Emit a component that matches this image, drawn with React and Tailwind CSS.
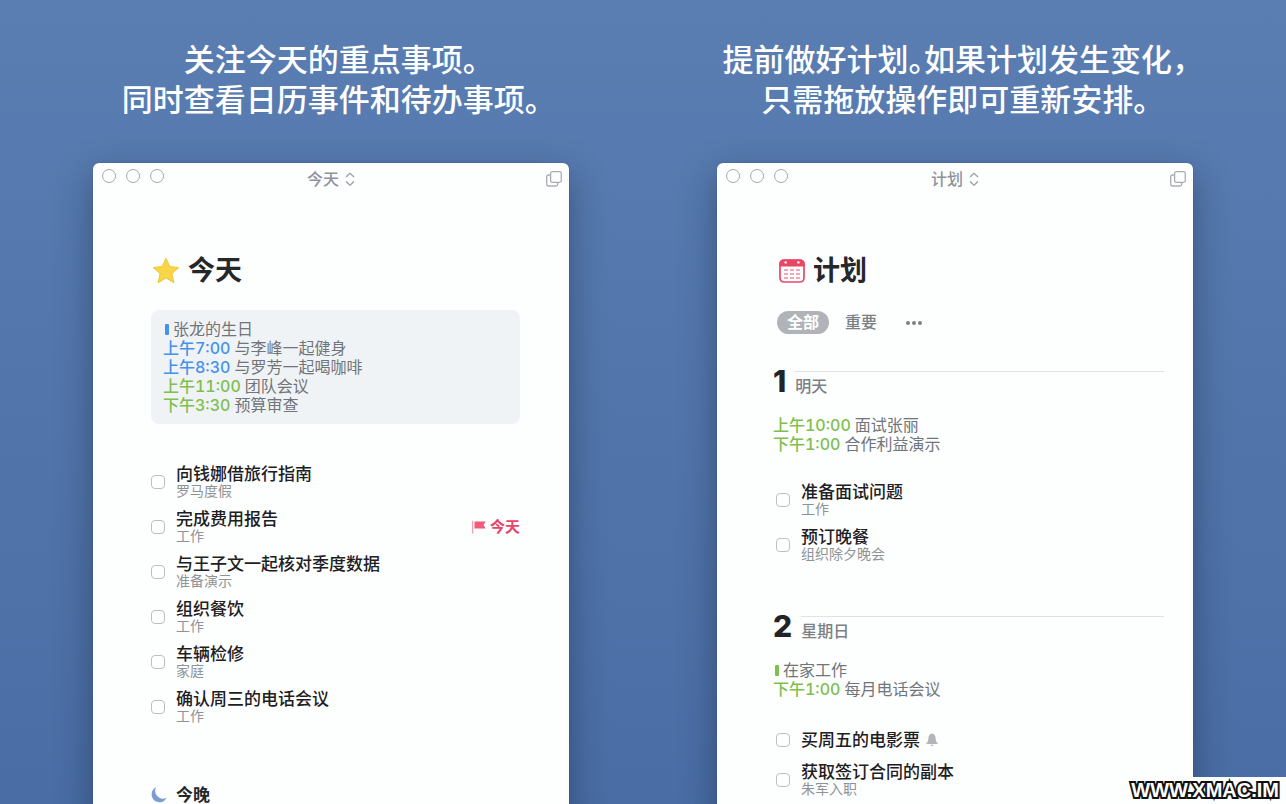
import React from "react";

function StarIcon() {
  return (
    <svg className="size-7 shrink-0" viewBox="0 0 28 28" aria-hidden="true">
      <path
        d="M15 1.6 L18.6 9.600 L27.400 10.500 L20.800 16.400 L22.700 25.400 L15 20.800 L7.300 25.400 L9.200 16.400 L2.600 10.500 L11.400 9.600 Z"
        fill="#f9d648"
        stroke="#f0c93a"
        strokeWidth="1.2"
        strokeLinejoin="round"
      />
    </svg>
  );
}

function CalendarIcon() {
  return (
    <svg className="ml-1.5 mr-0.5 h-[26px] w-[26px] shrink-0" viewBox="0 0 26 26" aria-hidden="true">
      <rect x="1" y="2" width="24" height="22" rx="4" fill="#fff" stroke="#ea4767" strokeWidth="1.7" />
      <path d="M.4 8.4V6A4.4 4.4 0 0 1 4.8 1.4h16.4A4.4 4.4 0 0 1 25.600 6v2.400Z" fill="#ea4767" />
      <circle cx="6.600" cy="4.400" r="1.200" fill="#fff" />
      <circle cx="19.400" cy="4.400" r="1.200" fill="#fff" />
      <g stroke="#f28ba0" strokeWidth="1.400">
        <path d="M5 12h4M11 12h4M17 12h4M5 16h4M11 16h4M17 16h4M5 20h4M11 20h4M17 20h4" />
      </g>
    </svg>
  );
}

function MoonIcon() {
  return (
    <svg className="size-4 shrink-0" viewBox="0 0 17 17" aria-hidden="true">
      <path d="M5.500 .2A8.400 8.400 0 1 0 16.600 11.500 8.300 8.300 0 0 1 5.500 .2Z" fill="#7d9cd3" />
    </svg>
  );
}

function FlagIcon() {
  return (
    <svg className="h-3.5 w-3.5" viewBox="0 0 14 14" aria-hidden="true">
      <path d="M.7 .8v12.700" stroke="#f08aa0" strokeWidth="1" />
      <path d="M2.500 1.500H13.600L11.600 5l2 3.500H2.500Z" fill="#ee5d7b" />
    </svg>
  );
}

function BellIcon() {
  return (
    <svg className="h-3.5 w-3" viewBox="0 0 12 14" aria-label="提醒">
      <path
        d="M6 .6C3.700 .8 2.600 2.600 2.400 5 2.200 7.800 1.800 9 .5 10v1h11v-1C10.200 9 9.800 7.800 9.600 5 9.400 2.600 8.300 .8 6 .6Z"
        fill="#b3b6b9"
      />
      <path d="M4.600 11.800h2.800A1.400 1.400 0 0 1 4.600 11.800Z" fill="#b3b6b9" />
    </svg>
  );
}

function TitleBar({ title }) {
  return (
    <header className="grid h-8 grid-cols-3 items-start">
      <div className="flex gap-2.5 pl-[9px] pt-[6px]">
        {["关闭", "最小化", "缩放"].map((name) => (
          <button
            key={name}
            type="button"
            aria-label={name}
            className="size-3.5 rounded-full border border-[#a6a8b3] bg-transparent"
          />
        ))}
      </div>
      <button
        type="button"
        className="flex items-center justify-center gap-1.5 pt-1 text-base leading-6 font-medium text-[#8e939b]"
      >
        {title}
        <svg className="h-3.5 w-2.5" viewBox="0 0 10 14" fill="none" stroke="#9a9ea5" strokeWidth="1.300" aria-hidden="true">
          <path d="M1 5l4-3.700L9 5M1 9.500l4 3.700 4-3.700" />
        </svg>
      </button>
      <button type="button" aria-label="新窗口" className="justify-self-end pr-[7px] pt-2">
        <svg className="size-4" viewBox="0 0 16 16" fill="none" stroke="#a9adb2" strokeWidth="1.300" aria-hidden="true">
          <rect x="4.600" y=".7" width="10.700" height="10.700" rx="1.800" />
          <path d="M4.600 4H2.500A1.800 1.800 0 0 0 .7 5.800v7.400A1.800 1.800 0 0 0 2.500 15h7.400a1.800 1.800 0 0 0 1.800-1.800v-1.800" />
        </svg>
      </button>
    </header>
  );
}

function Panel({ title, children }) {
  return (
    <section className="min-h-[760px] rounded-md bg-[#fdfefe] shadow-[0_0_1px_rgba(20,40,80,0.6),0_12px_36px_rgba(20,30,50,0.42)]">
      <TitleBar title={title} />
      {children}
    </section>
  );
}

const timeColor = { blue: "text-[#4492ec]", green: "text-[#7fbf4d]" };
const barColor = { blue: "bg-[#4492ec]", green: "bg-[#7fbf4d]" };

function Events({ items }) {
  return (
    <ul className="text-base leading-[19px] text-[#70757a]">
      {items.map(({ time, text, color }) => (
        <li key={text} className="flex items-center">
          {time ? (
            <span className={"mr-1 font-medium tabular-nums " + timeColor[color]}>{time}</span>
          ) : (
            <span className={"ml-0.5 mr-1 h-[11px] w-1 rounded-[1px] " + barColor[color]} />
          )}
          <span>{text}</span>
        </li>
      ))}
    </ul>
  );
}

function Todo({ id, title, area, due, bell }) {
  return (
    <li className="flex min-h-6 items-center">
      <input
        id={id}
        type="checkbox"
        className="size-3.5 shrink-0 appearance-none rounded-[4px] border border-[#bbbec3] bg-white checked:bg-[#4492ec]"
      />
      <label htmlFor={id} className="ml-[11px] block">
        <span className="flex items-center gap-1.5 text-[17px] leading-[18px] font-medium text-[#1d2023]">
          {title}
          {bell && <BellIcon />}
        </span>
        {area && <span className="block text-sm leading-4 text-[#8f9397]">{area}</span>}
      </label>
      {due && (
        <span className="ml-auto flex items-center gap-1 text-[15px] leading-4 font-bold text-[#e8446a]">
          <FlagIcon />
          {due}
        </span>
      )}
    </li>
  );
}

function TodoList({ items, prefix }) {
  return (
    <ul className="flex flex-col gap-[11px]">
      {items.map((item, i) => (
        <Todo key={item.title} id={prefix + "-" + i} {...item} />
      ))}
    </ul>
  );
}

function Day({ number, label, events, todos }) {
  return (
    <section>
      <div className="flex items-start gap-[9px]">
        <h2 className="text-[30px] leading-7 font-extrabold text-[#212427]">{number}</h2>
        <div className="mt-1 flex-1 border-t border-[#dfe1e3] pt-0.5 text-base leading-6 font-medium text-[#7b8085]">
          {label}
        </div>
      </div>
      <div className="mt-[18px]">
        <Events items={events} />
      </div>
      <div className="mt-[29px] pl-[3px]">
        <TodoList items={todos} prefix={"day-" + number} />
      </div>
    </section>
  );
}

const todayEvents = [
  { text: "张龙的生日", color: "blue" },
  { time: "上午7:00", text: "与李峰一起健身", color: "blue" },
  { time: "上午8:30", text: "与罗芳一起喝咖啡", color: "blue" },
  { time: "上午11:00", text: "团队会议", color: "green" },
  { time: "下午3:30", text: "预算审查", color: "green" },
];

const todayTodos = [
  { title: "向钱娜借旅行指南", area: "罗马度假" },
  { title: "完成费用报告", area: "工作", due: "今天" },
  { title: "与王子文一起核对季度数据", area: "准备演示" },
  { title: "组织餐饮", area: "工作" },
  { title: "车辆检修", area: "家庭" },
  { title: "确认周三的电话会议", area: "工作" },
];

const days = [
  {
    number: 1,
    label: "明天",
    events: [
      { time: "上午10:00", text: "面试张丽", color: "green" },
      { time: "下午1:00", text: "合作利益演示", color: "green" },
    ],
    todos: [
      { title: "准备面试问题", area: "工作" },
      { title: "预订晚餐", area: "组织除夕晚会" },
    ],
  },
  {
    number: 2,
    label: "星期日",
    events: [
      { text: "在家工作", color: "green" },
      { time: "下午1:00", text: "每月电话会议", color: "green" },
    ],
    todos: [
      { title: "买周五的电影票", bell: true },
      { title: "获取签订合同的副本", area: "朱军入职" },
    ],
  },
];

function Headline({ children }) {
  return (
    <p className="flex h-[163px] flex-col items-center pt-10 text-[31px] leading-10 font-medium whitespace-nowrap text-white [font-feature-settings:'halt']">
      {children}
    </p>
  );
}

export default function App() {
  return (
    <main className="relative h-screen overflow-hidden bg-linear-to-b from-[#5a7eb2] to-[#4a6da5] font-['Inter','Noto_Sans_CJK_SC',sans-serif]">
      <div className="grid grid-cols-2 gap-x-[148px] px-[93px]">
        <div>
          <Headline>
            <span>关注今天的重点事项。</span>
            <span>同时查看日历事件和待办事项。</span>
          </Headline>
          <Panel title="今天">
            <div className="pt-[60px] pr-[49px] pl-[58px]">
              <h1 className="flex items-center gap-[9px] text-[27px] leading-8 font-bold text-[#25282b]">
                <StarIcon />
                今天
              </h1>
              <div className="mt-[23px] rounded-lg bg-[#f0f3f5] pt-2.5 pr-3 pb-[9px] pl-3">
                <Events items={todayEvents} />
              </div>
              <div className="mt-[41px]">
                <TodoList items={todayTodos} prefix="today" />
              </div>
              <h2 className="mt-[63px] flex items-center gap-[9px] text-[17px] leading-4 font-bold text-[#25282b]">
                <MoonIcon />
                今晚
              </h2>
            </div>
          </Panel>
        </div>
        <div>
          <Headline>
            <span>提前做好计划。如果计划发生变化，</span>
            <span>只需拖放操作即可重新安排。</span>
          </Headline>
          <Panel title="计划">
            <div className="pt-[60px] pr-[29px] pl-14">
              <h1 className="flex items-center gap-1.5 text-[27px] leading-8 font-bold text-[#25282b]">
                <CalendarIcon />
                计划
              </h1>
              <div className="mt-6 mb-[33px] ml-1 flex items-center gap-4 text-base leading-[23px] text-[#7b8085]">
                <button type="button" className="rounded-full bg-[#b0b4b8] px-2.5 font-bold text-white">
                  全部
                </button>
                <button type="button" className="font-medium">
                  重要
                </button>
                <button type="button" aria-label="更多" className="flex gap-0.5 pl-[13px]">
                  <span className="size-1 rounded-full bg-[#7b8085]" />
                  <span className="size-1 rounded-full bg-[#7b8085]" />
                  <span className="size-1 rounded-full bg-[#7b8085]" />
                </button>
              </div>
              <div className="flex flex-col gap-[50px]">
                {days.map((day) => (
                  <Day key={day.number} {...day} />
                ))}
              </div>
            </div>
          </Panel>
        </div>
      </div>
      <div className="absolute right-0 bottom-0 h-[27px] bg-[#fdfefe] pr-[7px] pl-1 font-['Liberation_Sans',sans-serif] text-[20px] leading-[27px] font-bold text-white [-webkit-text-stroke:4px_#111] [paint-order:stroke_fill]">
        WWW.XMAC.IM
      </div>
    </main>
  );
}
